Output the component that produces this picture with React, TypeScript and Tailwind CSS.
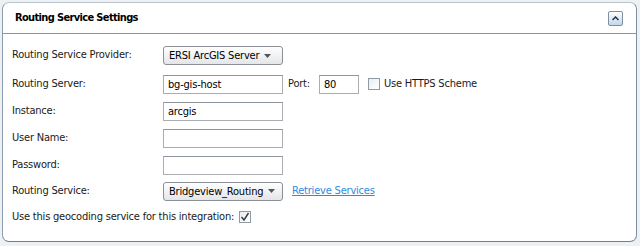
import React from "react";

const font = { fontFamily: '"DejaVu Sans", Verdana, sans-serif', fontStretch: "condensed" as const };

function Input({ value, w = "w-[120px]" }: { value?: string; w?: string }) {
  return (
    <div
      className={`${w} h-[19px] border border-[#abadb3] border-t-[#8e959d] bg-white flex items-center px-[4px] text-[11px] text-black leading-none whitespace-nowrap`}
    >
      {value}
    </div>
  );
}

function Select({ label, w = "w-[120px]" }: { label: string; w?: string }) {
  return (
    <div
      className={`${w} h-[19px] rounded-[3px] border border-[#8b9097] bg-gradient-to-b from-white to-[#e3e5e8] flex items-center px-[5px] text-[11px] text-black leading-none whitespace-nowrap`}
    >
      <span>{label}</span>
      <svg width="7" height="4" viewBox="0 0 7 4" className="ml-[5px] shrink-0">
        <path d="M0 0 H7 L3.5 4 Z" fill="#555" />
      </svg>
    </div>
  );
}

function Check({ checked }: { checked?: boolean }) {
  return (
    <div className="w-[12px] h-[12px] border border-[#8f9aa6] bg-gradient-to-br from-[#e9edf1] to-white flex items-center justify-center">
      {checked && (
        <svg width="10" height="10" viewBox="0 0 10 10">
          <path d="M1.5 5 L4 8 L8.5 1" fill="none" stroke="#3a3a3a" strokeWidth="1.4" />
        </svg>
      )}
    </div>
  );
}

function Row({ label, h, children }: { label: string; h: string; children?: React.ReactNode }) {
  return (
    <div className={`flex items-center ${h} whitespace-nowrap`}>
      <div className="w-[151px] shrink-0">{label}</div>
      {children}
    </div>
  );
}

export default function App() {
  return (
    <div className="w-[640px] h-[246px] bg-[#eef1f4] pt-[2px] pl-[2px] pr-[3px] pb-[4px]" style={font}>
      <div className="w-full h-full bg-white rounded-[7px] border border-[#b9c4cf] border-b-[#6f8091] border-r-[#7f8fa0] border-l-[#8c9bab] text-[11px] tracking-[-0.2px] text-[#1a1a1a]">
        <div className="h-[31px] border-b border-[#8796a6] flex items-center justify-between pl-[12px] pr-[13px]">
          <div className="font-bold text-[11px] tracking-[-0.65px] text-black pt-[1px]">Routing Service Settings</div>
          <div className="w-[15px] h-[15px] rounded-[2px] border border-[#7d8fa2] bg-gradient-to-b from-white to-[#c4d6e8] flex items-center justify-center">
            <svg width="7" height="5" viewBox="0 0 7 5">
              <path d="M0.5 4 L3.5 1 L6.5 4" fill="none" stroke="#1f3550" strokeWidth="1.5" />
            </svg>
          </div>
        </div>
        <div className="pl-[9px] pt-[7px]">
          <Row label="Routing Service Provider:" h="h-[29px]">
            <Select label="ERSI ArcGIS Server" />
          </Row>
          <Row label="Routing Server:" h="h-[28px]">
            <Input value="bg-gis-host" />
            <span className="ml-[5px] w-[31px]">Port:</span>
            <Input value="80" w="w-[40px]" />
            <div className="ml-[9px]">
              <Check />
            </div>
            <span className="ml-[4px]">Use HTTPS Scheme</span>
          </Row>
          <Row label="Instance:" h="h-[27px]">
            <Input value="arcgis" />
          </Row>
          <Row label="User Name:" h="h-[27px]">
            <Input />
          </Row>
          <Row label="Password:" h="h-[26px]">
            <Input />
          </Row>
          <Row label="Routing Service:" h="h-[26px]">
            <Select label="Bridgeview_Routing" />
            <a className="ml-[9px] text-[#2f8ae0] underline">Retrieve Services</a>
          </Row>
          <div className="flex items-center h-[26px] whitespace-nowrap">
            <span>Use this geocoding service for this integration:</span>
            <div className="ml-[5px]">
              <Check checked />
            </div>
          </div>
        </div>
      </div>
    </div>
  );
}
